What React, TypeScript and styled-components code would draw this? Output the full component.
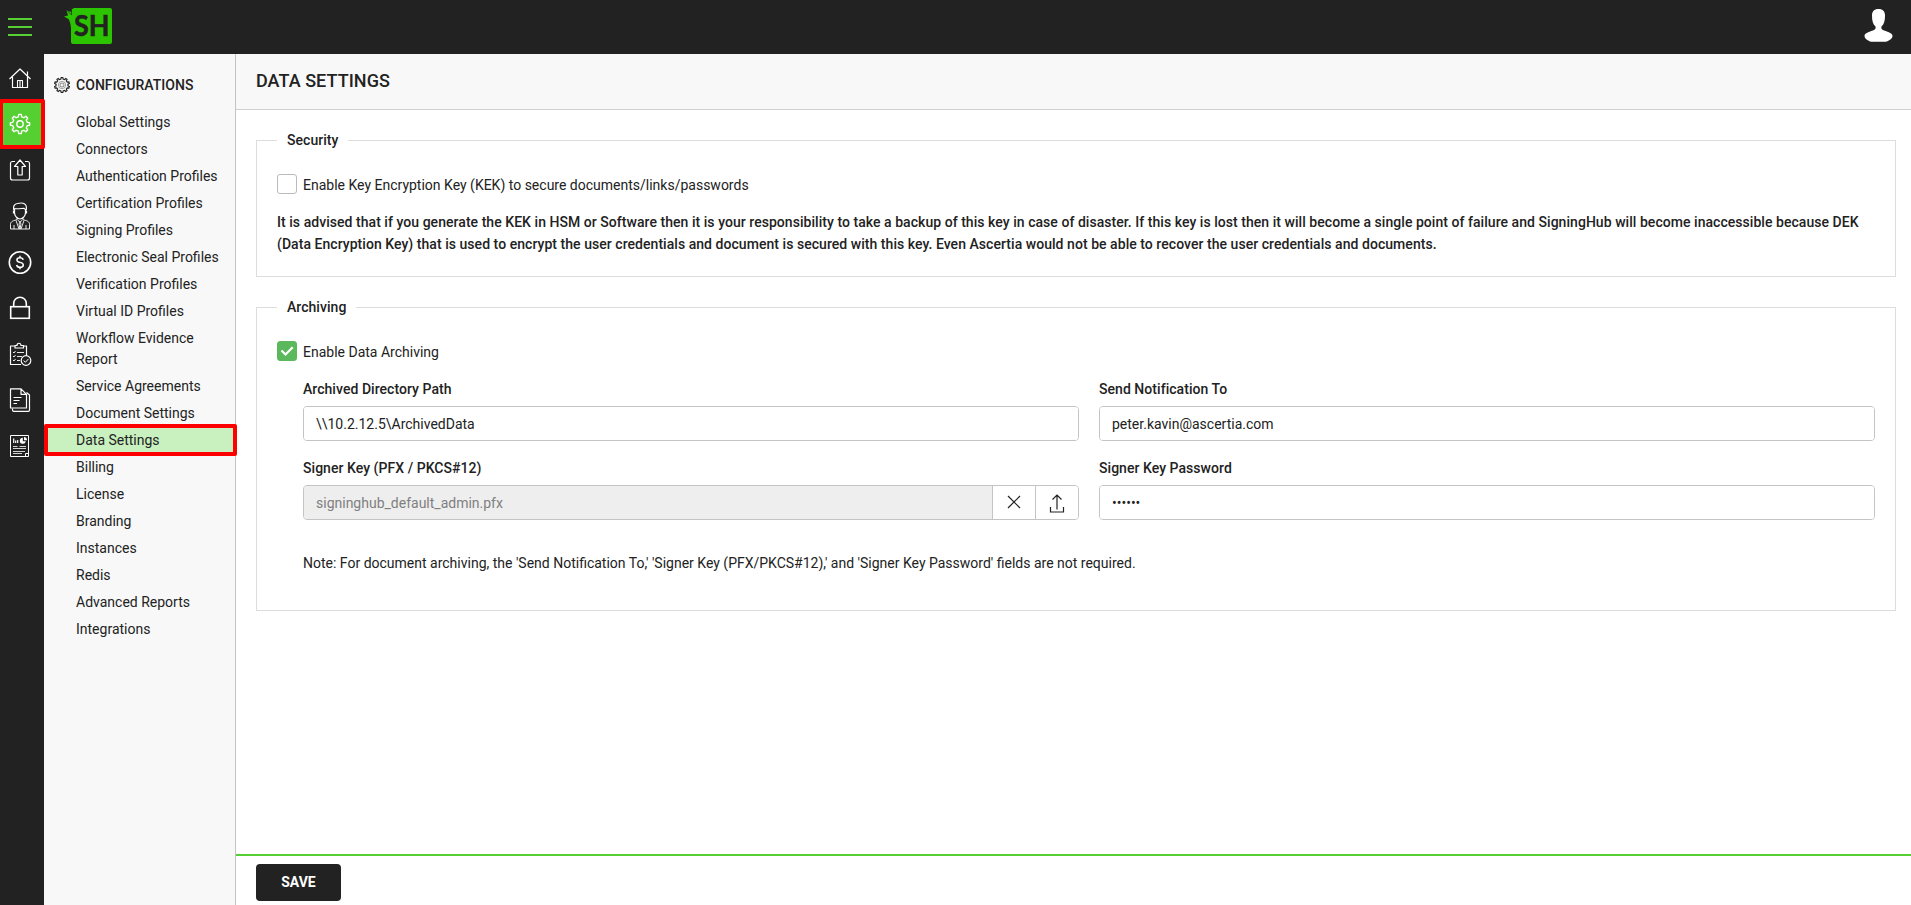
import React from "react";
import styled, { createGlobalStyle, css } from "styled-components";

const GlobalStyle = createGlobalStyle`
  *, *::before, *::after { box-sizing: border-box; }
  html, body, #root { height: 100%; }
  body {
    margin: 0;
    background: #fff;
    color: #222;
    font-family: Roboto, "Liberation Sans", sans-serif;
    font-size: 14px;
    line-height: 22px;
    overflow: hidden;
  }
`;

const strong = css`
  font-weight: 500;
  letter-spacing: 0.045px;
`;

const Page = styled.div`
  display: flex;
  flex-direction: column;
  height: 100vh;
`;

const Header = styled.header`
  display: flex;
  align-items: flex-start;
  height: 54px;
  flex: none;
  background: #222;
`;

const MenuButton = styled.button`
  display: flex;
  flex-direction: column;
  gap: 6px;
  width: 24px;
  margin: 18px 0 0 8px;
  padding: 0;
  border: 0;
  background: none;
`;

const MenuLine = styled.span`
  height: 2px;
  background: #56cf32;
`;

const Logo = styled.svg`
  margin: 8px 0 0 31px;
  overflow: visible;
`;

const Avatar = styled.svg`
  margin: 8px 18px 0 auto;
`;

const Body = styled.div`
  display: flex;
  flex: 1;
  min-height: 0;
`;

const Rail = styled.nav`
  display: flex;
  flex-direction: column;
  width: 44px;
  flex: none;
  background: #222;
  padding-top: 1px;
`;

const highlight = css`
  position: relative;
  &::after {
    content: "";
    position: absolute;
    z-index: 2;
    border: 4px solid #fe0000;
    border-radius: 2px;
    pointer-events: none;
  }
`;

const RailItem = styled.a<{ $active?: boolean }>`
  display: flex;
  align-items: center;
  justify-content: center;
  height: 46px;
  padding-right: 4px;
  color: #fff;
  ${(p) =>
    p.$active &&
    css`
      background: #56cf32;
      ${highlight}
      &::after { inset: -2px -1px -2px -1px; }
    `}
`;

const Sidebar = styled.aside`
  width: 192px;
  flex: none;
  background: #f8f8f8;
  border-right: 1px solid #c4c4c4;
`;

const SidebarTitle = styled.h2`
  display: flex;
  align-items: center;
  gap: 6px;
  height: 22px;
  margin: 20px 0 13px;
  padding-left: 10px;
  font-size: 14px;
  ${strong}
`;

const NavList = styled.ul`
  margin: 0;
  padding: 0;
  list-style: none;
`;

const NavItem = styled.li<{ $active?: boolean }>`
  padding: 3px 12px 3px 32px;
  line-height: 21px;
  ${(p) =>
    p.$active &&
    css`
      background: #c9f0bf;
      ${highlight}
      &::after { inset: -3px -2px -2px 0; }
    `}
`;

const Main = styled.main`
  display: flex;
  flex-direction: column;
  flex: 1;
  min-width: 0;
`;

const TitleBar = styled.div`
  height: 56px;
  flex: none;
  padding: 16px 20px 0;
  background: #f8f8f8;
  border-bottom: 1px solid #d0d0d0;
`;

const Title = styled.h1`
  margin: 0;
  font-size: 18px;
  line-height: 22px;
  ${strong}
`;

const Content = styled.form`
  flex: 1;
  padding: 19px 15px 0 20px;
`;

const Group = styled.fieldset<{ $height: number }>`
  height: ${(p) => p.$height}px;
  min-width: 0;
  margin: 0 0 19px;
  padding: 23px 20px 0;
  border: 1px solid #ddd;
`;

const Legend = styled.legend`
  padding: 0 10px;
  ${strong}
`;

const CheckRow = styled.label`
  display: flex;
  align-items: center;
  gap: 6px;
  height: 20px;
`;

const CheckText = styled.span`
  position: relative;
  top: 1px;
`;

const Box = styled.span<{ $checked?: boolean }>`
  display: flex;
  align-items: center;
  justify-content: center;
  width: 20px;
  height: 20px;
  border: 1px solid ${(p) => (p.$checked ? "#5cb85c" : "#bbb")};
  border-radius: 3px;
  background: ${(p) => (p.$checked ? "#5cb85c" : "#fff")};
`;

const Advice = styled.p`
  margin: 17px 0 0;
  ${strong}
`;

const Fields = styled.div`
  display: grid;
  grid-template-columns: 1fr 1fr;
  column-gap: 20px;
  row-gap: 16px;
  padding: 17px 0 0 26px;
`;

const Field = styled.label`
  display: flex;
  flex-direction: column;
  gap: 6px;
`;

const FieldName = styled.span`
  ${strong}
`;

const InputGroup = styled.div`
  display: flex;
  height: 35px;
  border: 1px solid #c4c4c4;
  border-radius: 4px;
  overflow: hidden;
`;

const Input = styled.input`
  flex: 1;
  min-width: 0;
  padding: 0 12px;
  border: 0;
  outline: 0;
  background: #fff;
  color: #222;
  font: inherit;
  &:disabled {
    background: #eee;
    color: #808080;
  }
`;

const AddOn = styled.button`
  display: flex;
  align-items: center;
  justify-content: center;
  width: 43px;
  padding: 0;
  border: 0;
  border-left: 1px solid #c4c4c4;
  background: #fff;
  color: #222;
`;

const Note = styled.p`
  margin: 32px 0 0 26px;
`;

const Footer = styled.footer`
  height: 51px;
  flex: none;
  padding: 8px 20px;
  border-top: 2px solid #56cf32;
`;

const SaveButton = styled.button`
  width: 85px;
  height: 37px;
  padding: 0 0 1px;
  border: 0;
  border-radius: 4px;
  background: #222;
  color: #fff;
  font: 700 14px Roboto, "Liberation Sans", sans-serif;
`;

const gearPath = (teeth: number, outer: number, inner: number) => {
  const pts: string[] = [];
  const step = (Math.PI * 2) / teeth;
  for (let i = 0; i < teeth; i++) {
    const a = i * step - Math.PI / 2;
    [
      [a - step * 0.29, inner],
      [a - step * 0.17, outer],
      [a + step * 0.17, outer],
      [a + step * 0.29, inner],
    ].forEach(([t, r]) =>
      pts.push(`${(12 + r * Math.cos(t)).toFixed(2)} ${(12 + r * Math.sin(t)).toFixed(2)}`)
    );
  }
  return `M${pts.join("L")}Z`;
};

const Icon = ({
  w = 24,
  h = 24,
  sw = 1.2,
  children,
}: {
  w?: number;
  h?: number;
  sw?: number;
  children: React.ReactNode;
}) => (
  <svg
    width={w}
    height={h}
    viewBox={`0 0 ${w} ${h}`}
    fill="none"
    stroke="currentColor"
    strokeWidth={sw}
    strokeLinejoin="round"
  >
    {children}
  </svg>
);

const HomeIcon = () => (
  <Icon>
    <path d="M1.500 13 12 3l10.500 10M4.500 11v10.500h15V11M19.500 10V5.500" />
    <path d="M9.500 21.500v-7h5v7M12 15v6" strokeWidth="1.100" />
  </Icon>
);

const GearIcon = () => (
  <Icon sw={1.4}>
    <path d={gearPath(8, 9.7, 7.4)} />
    <circle cx="12" cy="12" r="3.200" />
  </Icon>
);

const UploadBoxIcon = () => (
  <Icon>
    <path d="M7 3.500H4.500a2 2 0 0 0-2 2V20a2 2 0 0 0 2 2h15a2 2 0 0 0 2-2V5.500a2 2 0 0 0-2-2H17" />
    <path d="M12 2 6.500 8.500h3.300v8.500h4.400V8.500h3.300z" />
  </Icon>
);

const PersonIcon = () => (
  <Icon w={24} h={28} sw={1.2}>
    <path d="M5.800 8C5 4 6.500 2 9.500 1.500c3-.8 6-.5 7.500.8 2 1 1.500 3.500 1.200 5.700M6.500 6.500c4 .8 7-.2 9.500-.2 1 .3 1.300 1.200 1.500 2.200M6.500 6.500v4c0 3.300 2.500 6.500 5.500 6.500s5.500-3.200 5.500-6.500v-3M5.500 8.500v3M18.500 8.500v3" />
    <path d="M9 15.500v2.200c-3 .8-6.500 1.300-6.500 4.800v4.500h19v-4.500c0-3.500-3.500-4-6.500-4.800v-2.200M8 18.500 11 27M16 18.500 13 27M9.500 18l2.500 2 2.500-2M12 20l-1 2 1 5M12 20l1 2-1 5M6 23v4M18 23v4" strokeWidth=".9" />
  </Icon>
);

const DollarIcon = () => (
  <Icon sw={1.6}>
    <circle cx="12" cy="12.500" r="10.700" />
    <path d="M15.200 9.700c-.4-1.500-1.500-2-3.200-2-1.800 0-3.100.8-3.100 2.200 0 3.300 6.400 1.700 6.400 5 0 1.600-1.300 2.400-3.300 2.400-1.900 0-3-.8-3.400-2.300M12 5.700v2M12 17.300v2" strokeWidth="1.500" />
  </Icon>
);

const LockIcon = () => (
  <Icon sw={1.6}>
    <rect x="2.700" y="10.700" width="18.600" height="11.600" strokeLinejoin="miter" />
    <path d="M5.700 10.500V7.500a6.300 6.300 0 0 1 12.600 0v3" />
  </Icon>
);

const ClipboardIcon = () => (
  <Icon sw={1.2}>
    <path d="M13 22.500H2.500V4H7M15 4h3.500v9.500M7 6h8.500V3.500H13c0-3-4-3-4 0H7z" />
    <path d="M5 10l1 1 1.500-2M5 14l1 1 1.500-2M5 18l1 1 1.500-2M9 10.500h7M9 14.500h5M9 18.500h3" strokeWidth=".9" />
    <circle cx="18" cy="18.500" r="4.800" />
    <path d="m15.700 18.500 1.700 1.800 3-3.300" strokeWidth="1" />
  </Icon>
);

const DocumentsIcon = () => (
  <Icon sw={1.2}>
    <path d="M2.500.800h10.500l5.500 5.500v13.700h-16zM13 .800v5.500h5.500" />
    <path d="M4.500 20.500v1.500q0 1.300 1.300 1.300H20.200q1.300 0 1.300-1.300V7l-3-2.500" />
    <path d="M5.500 9.500h8M5.500 12.500h6M5.500 15.500h3.500" strokeWidth="1.200" />
  </Icon>
);

const ReportIcon = () => (
  <Icon sw={1}>
    <path d="M2.500 1.500h18v21h-18zM20.500 19.500h-3v3" />
    <path d="M5.700 4.500V9M7.700 6.500V9M9.700 6v3" strokeWidth="1.200" />
    <path d="M14.800 3.800a3 3 0 1 0 3 3.500h-3z" fill="currentColor" stroke="none" />
    <path d="M16 3v3.200h3A3.200 3.200 0 0 0 16 3z" fill="currentColor" stroke="none" />
    <path d="M5 12.500h4.500M11.500 12.500H18M5 14.500h13M5 17.500h12M5 19.500h9" strokeWidth=".8" />
  </Icon>
);

const railIcons = [
  HomeIcon,
  GearIcon,
  UploadBoxIcon,
  PersonIcon,
  DollarIcon,
  LockIcon,
  ClipboardIcon,
  DocumentsIcon,
  ReportIcon,
];

const navItems = [
  "Global Settings",
  "Connectors",
  "Authentication Profiles",
  "Certification Profiles",
  "Signing Profiles",
  "Electronic Seal Profiles",
  "Verification Profiles",
  "Virtual ID Profiles",
  "Workflow Evidence Report",
  "Service Agreements",
  "Document Settings",
  "Data Settings",
  "Billing",
  "License",
  "Branding",
  "Instances",
  "Redis",
  "Advanced Reports",
  "Integrations",
];

export default function App() {
  return (
    <Page>
      <GlobalStyle />
      <Header>
        <MenuButton aria-label="Menu">
          <MenuLine />
          <MenuLine />
          <MenuLine />
        </MenuButton>
        <Logo width="50" height="36" viewBox="0 0 50 36">
          <path
            d="M11 0h36q2 0 2 2v32q0 2-2 2H10q-2 0-2-2V20Q7.500 14 5.500 11L1 8.500 5 7.500 3.500 2.500 8.500 4V1.500z"
            fill="#2cc400"
          />
          <path d="M4 2.500 8.500 7V1.500" fill="none" stroke="#222" strokeWidth=".7" />
          <text
            x="11"
            y="28"
            textLength="35.500"
            lengthAdjust="spacingAndGlyphs"
            fontFamily="Lato, sans-serif"
            fontWeight="700"
            fontSize="28"
            fill="#222"
            stroke="#222"
            strokeWidth=".5"
          >
            SH
          </text>
        </Logo>
        <Avatar width="30" height="36" viewBox="0 0 30 36">
          <path
            d="M15.500 1C11 1 9 3.500 9 7.500c0 5 .8 8.500 3.500 11 .5 2-.2 3.200-2.500 4C5 24 1.500 25.500 1.500 28c0 2.500 4 5.800 8 5.800h12c4 0 8-3.300 8-5.800 0-2.500-3.500-4-8.500-5.500-2.300-.8-3-2-2.500-4 2.700-2.500 3.500-6 3.500-11C22 3.500 20 1 15.500 1z"
            fill="#fff"
          />
        </Avatar>
      </Header>
      <Body>
        <Rail>
          {railIcons.map((Glyph, i) => (
            <RailItem key={i} $active={i === 1}>
              <Glyph />
            </RailItem>
          ))}
        </Rail>
        <Sidebar>
          <SidebarTitle>
            <svg width="16" height="16" viewBox="0 0 24 24" fill="none" stroke="#222">
              <path d={gearPath(10, 11.3, 9)} strokeWidth="1.700" />
              <circle cx="12" cy="12" r="5.500" strokeWidth=".6" />
              <circle cx="12" cy="12" r="3" strokeWidth=".8" />
            </svg>
            CONFIGURATIONS
          </SidebarTitle>
          <NavList>
            {navItems.map((name) => (
              <NavItem key={name} $active={name === "Data Settings"}>
                {name}
              </NavItem>
            ))}
          </NavList>
        </Sidebar>
        <Main>
          <TitleBar>
            <Title>DATA SETTINGS</Title>
          </TitleBar>
          <Content onSubmit={(e) => e.preventDefault()}>
            <Group $height={148}>
              <Legend>Security</Legend>
              <CheckRow>
                <Box />
                <CheckText>Enable Key Encryption Key (KEK) to secure documents/links/passwords</CheckText>
              </CheckRow>
              <Advice>
                It is advised that if you generate the KEK in HSM or Software then it is your responsibility to take a
                backup of this key in case of disaster. If this key is lost then it will become a single point of
                failure and SigningHub will become inaccessible because DEK (Data Encryption Key) that is used to
                encrypt the user credentials and document is secured with this key. Even Ascertia would not be able to
                recover the user credentials and documents.
              </Advice>
            </Group>
            <Group $height={315}>
              <Legend>Archiving</Legend>
              <CheckRow>
                <Box $checked>
                  <svg width="14" height="12" viewBox="0 0 14 12" fill="none" stroke="#fff" strokeWidth="2.200">
                    <path d="M1.500 5.500 5.500 9.500 12.700 2.300" />
                  </svg>
                </Box>
                <CheckText>Enable Data Archiving</CheckText>
              </CheckRow>
              <Fields>
                <Field>
                  <FieldName>Archived Directory Path</FieldName>
                  <InputGroup>
                    <Input defaultValue={"\\\\10.2.12.5\\ArchivedData"} />
                  </InputGroup>
                </Field>
                <Field>
                  <FieldName>Send Notification To</FieldName>
                  <InputGroup>
                    <Input defaultValue="peter.kavin@ascertia.com" />
                  </InputGroup>
                </Field>
                <Field>
                  <FieldName>Signer Key (PFX / PKCS#12)</FieldName>
                  <InputGroup>
                    <Input disabled defaultValue="signinghub_default_admin.pfx" />
                    <AddOn type="button" aria-label="Clear">
                      <Icon w={14} h={15} sw={1.2}>
                        <path d="m1 1 12 12M13 1 1 13" />
                      </Icon>
                    </AddOn>
                    <AddOn type="button" aria-label="Upload">
                      <Icon w={16} h={20} sw={1.2}>
                        <path d="M8 16.500V2M3.500 6.500 8 2l4.500 4.500M1.500 14v5h13v-5" strokeLinejoin="miter" />
                      </Icon>
                    </AddOn>
                  </InputGroup>
                </Field>
                <Field>
                  <FieldName>Signer Key Password</FieldName>
                  <InputGroup>
                    <Input type="password" defaultValue="123456" />
                  </InputGroup>
                </Field>
              </Fields>
              <Note>
                Note: For document archiving, the 'Send Notification To,' 'Signer Key (PFX/PKCS#12),' and 'Signer Key
                Password' fields are not required.
              </Note>
            </Group>
          </Content>
          <Footer>
            <SaveButton type="button">SAVE</SaveButton>
          </Footer>
        </Main>
      </Body>
    </Page>
  );
}
